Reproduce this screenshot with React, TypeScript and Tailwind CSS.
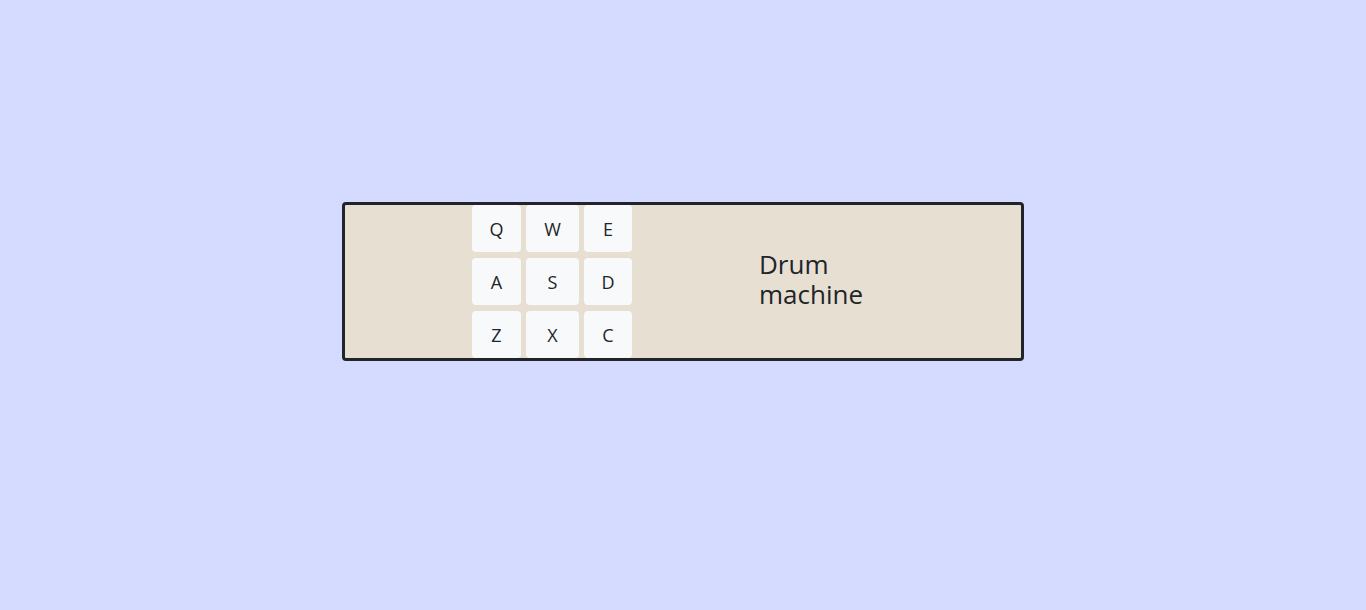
const pads = ["Q", "W", "E", "A", "S", "D", "Z", "X", "C"];

export default function App() {
  return (
    <div
      className="min-h-screen bg-[#d4dbff] pt-[202px] text-[#212529]"
      style={{ fontFamily: '"Segoe UI", "Open Sans", "Noto Sans", sans-serif' }}
    >
      <div className="mx-auto flex h-[159px] w-[682px] rounded-[4px] border-[3px] border-[#212529] bg-[#e8dfd3]">
        <div className="w-[127px]" />
        <div className="grid grid-cols-[49px_53px_48px] grid-rows-[47px_47px_47px] gap-x-[5px] gap-y-[6px]">
          {pads.map((key) => (
            <button
              key={key}
              className="flex items-center justify-center rounded-[4px] bg-[#f8f9fa] pt-[2px] text-[18px]"
            >
              {key}
            </button>
          ))}
        </div>
        <div className="flex flex-1 items-center justify-center pb-[6px]">
          <div className="w-[135px] text-[26px] leading-[30px]">Drum machine</div>
        </div>
      </div>
    </div>
  );
}
